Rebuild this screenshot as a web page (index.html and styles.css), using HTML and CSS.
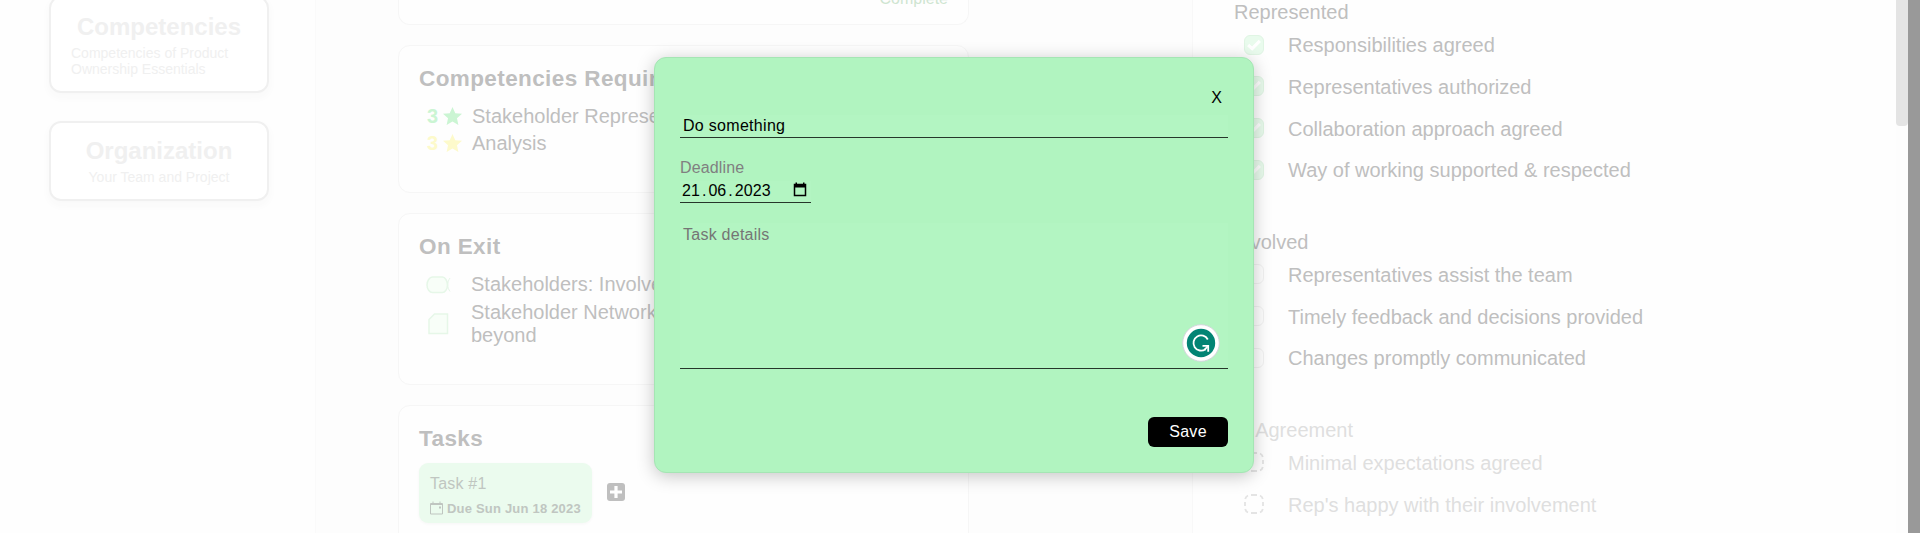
FILE: index.html
```html
<!DOCTYPE html>
<html lang="en">
<head>
<meta charset="utf-8">
<title>Stakeholders</title>
<link rel="stylesheet" href="styles.css">
</head>
<body>
<div class="page">
  <aside class="sidebar">
    <section class="nav-card nav-card-first"><h2>Competencies</h2><p>Competencies of Product Ownership Essentials</p></section>
    <section class="nav-card nav-card-second"><h2>Organization</h2><p>Your Team and Project</p></section>
  </aside>
  <main class="main">
    <section class="card card-summary"><span class="complete">Complete</span></section>
    <section class="card card-comp">
      <h3>Competencies Required</h3>
      <div class="comp"><b class="green">3</b><svg class="star green" viewBox="0 0 20 20"><path d="M10 0l2.900 6.500 7.100.7-5.300 4.700 1.500 7L10 15.300 3.800 18.900l1.500-7L0 7.200l7.100-.7z"/></svg><span>Stakeholder Representation</span></div>
      <div class="comp"><b class="yellow">3</b><svg class="star yellow" viewBox="0 0 20 20"><path d="M10 0l2.900 6.500 7.100.7-5.300 4.700 1.500 7L10 15.300 3.800 18.900l1.500-7L0 7.200l7.100-.7z"/></svg><span>Analysis</span></div>
    </section>
    <section class="card card-exit">
      <h3>On Exit</h3>
      <div class="exit"><svg class="shape" width="26" height="18" viewBox="0 0 26 18"><path d="M6.500 1h10c2.500 0 5 4 5 8s-2.500 7.500-5 7.500h-10C3.500 16.500 1 13 1 9s2.500-8 5.500-8z"/><path class="tail" d="M24 2c-3 4-3 9.500 0 13.500"/></svg><span>Stakeholders: Involved</span></div>
      <div class="exit exit-tall"><svg class="shape" width="26" height="22" viewBox="0 0 26 22"><path d="M8.500 1H21.500V20.500H3V6.500z"/></svg><span>Stakeholder Network and<br>beyond</span></div>
    </section>
    <section class="card card-tasks">
      <h3>Tasks</h3>
      <div class="tasks">
        <div class="task">
          <div class="task-name">Task #1</div>
          <div class="task-due"><svg width="13" height="14" viewBox="0 0 13 14"><path d="M.5 2.500h12v10.500H.5zM0 3.500h13M3 .5v2M10 .5v2" fill="none" stroke="#bfc5c0"/><path d="M9 5.500h2v2H9z" fill="#bfc5c0"/></svg><span>Due Sun Jun 18 2023</span></div>
        </div>
        <svg class="plus" width="18" height="18" viewBox="0 0 18 18"><rect width="18" height="18" rx="3" fill="#bfbfbf"/><path d="M9 3v12M3 9h12" stroke="#fff" stroke-width="3.200"/></svg>
      </div>
    </section>
  </main>
  <section class="checklist">
    <div class="group">
      <h4>Represented</h4>
      <div class="check"><i class="box done"><svg viewBox="0 0 20 20"><path d="M3.500 10l4.500 4 8.500-8.500"/></svg></i><span>Responsibilities agreed</span></div>
      <div class="check"><i class="box done"><svg viewBox="0 0 20 20"><path d="M3.500 10l4.500 4 8.500-8.500"/></svg></i><span>Representatives authorized</span></div>
      <div class="check"><i class="box done"><svg viewBox="0 0 20 20"><path d="M3.500 10l4.500 4 8.500-8.500"/></svg></i><span>Collaboration approach agreed</span></div>
      <div class="check"><i class="box done"><svg viewBox="0 0 20 20"><path d="M3.500 10l4.500 4 8.500-8.500"/></svg></i><span>Way of working supported &amp; respected</span></div>
    </div>
    <div class="group">
      <h4>Involved</h4>
      <div class="check"><i class="box"></i><span>Representatives assist the team</span></div>
      <div class="check"><i class="box"></i><span>Timely feedback and decisions provided</span></div>
      <div class="check"><i class="box"></i><span>Changes promptly communicated</span></div>
    </div>
    <div class="group faint">
      <h4>In Agreement</h4>
      <div class="check"><i class="box dashed"><svg viewBox="0 0 20 20"><path d="M1 12V8M1.200 5A5 5 0 0 1 4 1.500M7 1h6M16 1.500A5 5 0 0 1 18.800 5M19 8v4M18.800 15a5 5 0 0 1-2.800 3.500M13 19H7M4 18.500A5 5 0 0 1 1.200 15"/></svg></i><span>Minimal expectations agreed</span></div>
      <div class="check"><i class="box dashed"><svg viewBox="0 0 20 20"><path d="M1 12V8M1.200 5A5 5 0 0 1 4 1.500M7 1h6M16 1.500A5 5 0 0 1 18.800 5M19 8v4M18.800 15a5 5 0 0 1-2.800 3.500M13 19H7M4 18.500A5 5 0 0 1 1.200 15"/></svg></i><span>Rep's happy with their involvement</span></div>
    </div>
  </section>
  <div class="scroll"><div class="thumb"></div></div>
  <div class="edge"></div>
</div>
<div class="modal">
  <div class="close">X</div>
  <div class="field title">Do something</div>
  <div class="label">Deadline</div>
  <div class="field date"><span>21</span><span class="dot">.</span><span>06</span><span class="dot">.</span><span>2023</span><svg width="14" height="15" viewBox="0 0 14 15"><path d="M1.500 2.500h11v11h-11z" fill="none" stroke="#000" stroke-width="1.500"/><path d="M1 2h12v3.500H1zM2.500 .5H4V2H2.500zM10 .5h1.500V2H10z"/></svg></div>
  <div class="field details">Task details</div>
  <div class="actions"><button class="save">Save</button></div>
  <svg class="badge" width="38" height="38" viewBox="0 0 38 38"><circle cx="19" cy="19" r="18.300" fill="#fff" stroke="#d3d6dc"/><circle cx="19" cy="19" r="14.200" fill="#028474"/><path d="M25.800 15.500A7.600 7.600 0 1 0 23.500 25.200M20.500 21.900h5.700v5.800" fill="none" stroke="#fff" stroke-width="1.800"/><path d="M26 22l-3.500 3.800" stroke="#fff" stroke-width="1.800"/></svg>
</div>
</body>
</html>
```
FILE: styles.css
```css
* { box-sizing: border-box; }
body { margin: 0; height: 533px; overflow: hidden; background: #fefefe; font-family: "Liberation Sans", Arial, sans-serif; font-size: 20px; line-height: 23px; color: #bfbfbf; }
h2, h3, h4, p { margin: 0; }
.page { display: flex; height: 533px; overflow: hidden; }
.sidebar { width: 316px; padding-left: 49px; border-right: 1px solid #fafafa; color: #f0f0f0; flex: none; }
.nav-card { width: 220px; border: 2px solid #f0f0f0; border-radius: 12px; background: #fff; box-shadow: 0 4px 10px #f8f8f8; display: flex; flex-direction: column; align-items: center; padding: 0 20px; }
.nav-card h2 { font-size: 24px; line-height: 28px; }
.nav-card p { font-size: 14px; line-height: 16px; margin-top: 4px; }
.nav-card-first { height: 97px; margin-top: -4px; padding-top: 15px; }
.nav-card-second { height: 80px; margin-top: 28px; padding-top: 14px; }
.main { width: 877px; flex: none; padding-left: 82px; background: #fdfdfd; border-right: 1px solid #f8f8f8; }
.card { width: 571px; border: 1px solid #f6f6f6; border-radius: 12px; background: #fefefe; padding: 0 20px; margin-bottom: 20px; }
.card h3 { font-size: 22.500px; line-height: 26px; letter-spacing: .4px; }
.card-summary { height: 25px; border-top: 0; border-radius: 0 0 12px 12px; display: flex; justify-content: flex-end; }
.complete { color: #cfe5d1; font-size: 16px; line-height: 18px; margin-top: -10px; }
.card-comp { height: 148px; padding-top: 20px; }
.comp { display: flex; height: 27px; align-items: center; padding-left: 8px; white-space: nowrap; }
.card-comp h3 { margin-bottom: 11px; }
.comp b { width: 16px; }
.star { width: 19px; height: 19px; margin-right: 10px; }
.green { color: #cbf5d3; fill: #cbf5d3; }
.yellow { color: #fdfacb; fill: #fdfacb; }
.card-exit { height: 172px; padding-top: 20px; }
.card-exit h3 { margin-bottom: 13px; }
.exit { display: flex; align-items: center; padding-left: 7px; gap: 19px; height: 23px; white-space: nowrap; }
.exit-tall { height: 46px; margin-top: 5px; }
.shape { fill: #f8fef8; stroke: #e6f7e8; stroke-width: 1.500; }
.tail { fill: none; stroke-width: 1; }
.card-tasks { height: 180px; padding-top: 20px; }
.tasks { display: flex; align-items: center; gap: 15px; margin-top: 11px; }
.plus { margin-bottom: 2px; }
.task { width: 173px; height: 60px; background: #ebfbee; border-radius: 9px; padding: 11px 11px 0; color: #c0c6c1; box-shadow: 0 1px 3px #f6f6f6; }
.task-name { font-size: 16px; line-height: 20px; letter-spacing: .2px; }
.task-due { display: flex; align-items: center; gap: 4px; font-size: 13px; line-height: 18px; font-weight: bold; letter-spacing: .2px; margin-top: 5px; white-space: nowrap; }
.task-due span { padding-top: 1px; }
.task-due svg { flex: none; margin-bottom: 2px; }
.checklist { width: 703px; flex: none; padding: 1px 0 0 41px; }
.group { margin-bottom: 40px; }
.group h4 { font-weight: normal; font-size: 20px; line-height: 23px; }
.check { display: flex; align-items: center; gap: 24px; height: 41.670px; padding-left: 10px; }
.check span { padding-top: 2px; }
.box { width: 20px; height: 20px; border: 1px solid #f2f2f2; border-radius: 6px; }
.box svg { display: block; width: 100%; height: 100%; fill: none; stroke: #fff; stroke-width: 3.500; }
.done { background: #e9fbed; border-color: #e0f5e4; }
.dashed { border: 0; }
.dashed svg { stroke: #e4e4e4; stroke-width: 1.800; }
.faint { color: #dfdfdf; }
.scroll { width: 12px; background: #fdfdfd; }
.thumb { height: 126px; background: #e4e4e4; border-radius: 0 0 4px 4px; }
.edge { width: 12px; background: #999; }
.modal { position: absolute; left: 654px; top: 57px; width: 600px; height: 416px; background: #b1f4c0; border: 1px solid #a5e5b4; border-radius: 12px; box-shadow: 0 3px 18px rgba(0,0,0,.23); padding: 31px 25px 0; color: #000; font-size: 16px; line-height: 18px; letter-spacing: .15px; }
.close { text-align: right; padding-right: 6px; }
.field { border-bottom: 1px solid #26362a; background: #b3f5c2; padding: 0 3px; }
.title { height: 23px; margin-top: 8px; padding-top: 2px; letter-spacing: .3px; }
.label { color: #808080; margin-top: 21px; }
.date { width: 131px; height: 22px; margin-top: 4px; display: flex; align-items: flex-start; padding: 1px 3px 0 2px; letter-spacing: .05px; }
.dot { margin: 0 2px; }
.date svg { margin: 0 1px 0 auto; }
.details { height: 146px; color: #757575; margin-top: 20px; padding-top: 3px; letter-spacing: .25px; }
.actions { display: flex; justify-content: flex-end; margin-top: 48px; }
.save { width: 80px; height: 30px; border: 0; border-radius: 6px; background: #000; color: #fff; font: 16px "Liberation Sans", Arial, sans-serif; letter-spacing: .3px; padding: 0; }
.badge { position: absolute; left: 527px; top: 266px; }
```
